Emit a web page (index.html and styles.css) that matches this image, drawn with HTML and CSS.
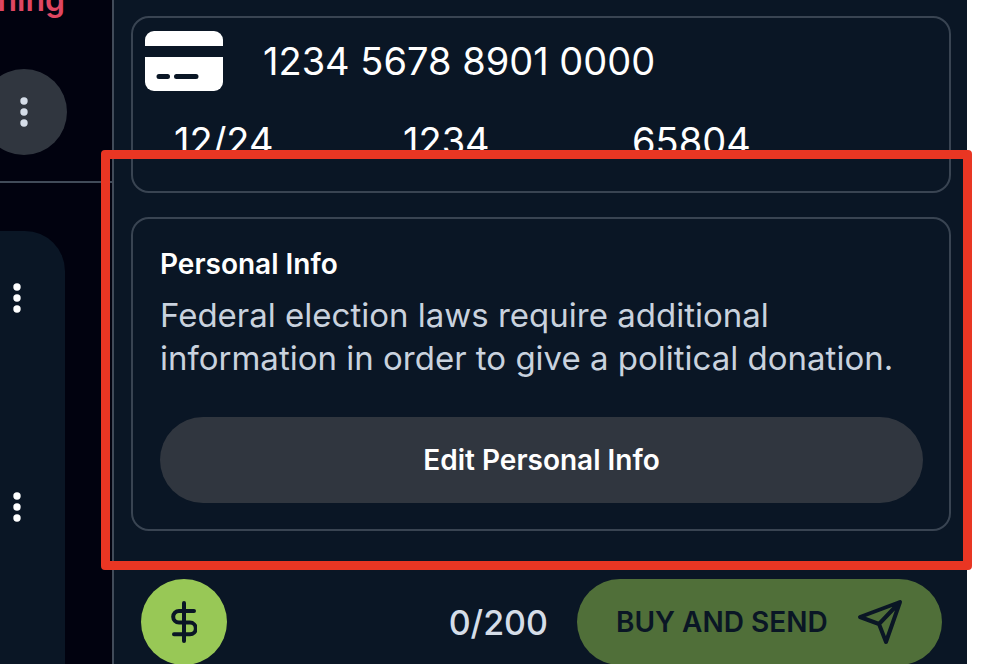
FILE: index.html
```html
<!DOCTYPE html>
<html lang="en">
<head>
<meta charset="utf-8">
<title>Payment details</title>
<link rel="stylesheet" href="styles.css">
</head>
<body>
<div class="app">
  <aside class="sidebar">
    <header class="sidebar-head">
      <h1 class="status"><span>ning</span></h1>
      <button class="more more-round" type="button" aria-label="More options">
        <svg class="dots" viewBox="0 0 8 32"><circle cx="4" cy="5" r="3.700"/><circle cx="4" cy="16" r="3.700"/><circle cx="4" cy="27" r="3.700"/></svg>
      </button>
    </header>
    <section class="feed">
      <button class="more" type="button" aria-label="Item options">
        <svg class="dots" viewBox="0 0 8 32"><circle cx="4" cy="5" r="3.700"/><circle cx="4" cy="16" r="3.700"/><circle cx="4" cy="27" r="3.700"/></svg>
      </button>
      <button class="more" type="button" aria-label="Item options">
        <svg class="dots" viewBox="0 0 8 32"><circle cx="4" cy="5" r="3.700"/><circle cx="4" cy="16" r="3.700"/><circle cx="4" cy="27" r="3.700"/></svg>
      </button>
    </section>
  </aside>
  <main class="panel">
    <section class="box card">
      <div class="card-top">
        <svg class="card-icon" viewBox="0 0 78 60">
          <path d="M0 15V9a9 9 0 0 1 9-9h60a9 9 0 0 1 9 9v6z"/>
          <path d="M0 26h78v25a9 9 0 0 1-9 9H9a9 9 0 0 1-9-9z"/>
          <path class="card-lines" d="M14 45.500h8.500M31.500 45.500H51"/>
        </svg>
        <span class="digits">1234 5678 8901 0000</span>
      </div>
      <div class="card-bottom digits"><span>12/24</span><span>1234</span><span>65804</span></div>
    </section>
    <section class="box personal">
      <h2 class="label">Personal Info</h2>
      <p class="note">Federal election laws require additional information in order to give a political donation.</p>
      <button class="pill edit" type="button">Edit Personal Info</button>
    </section>
    <footer class="actions">
      <button class="coin" type="button" aria-label="Add amount">
        <svg class="coin-icon" viewBox="0 0 26 42"><path d="M13 2v38M23 10H8a5.800 5.800 0 0 0 0 11.600H19a5.800 5.800 0 0 1 0 11.600H3"/></svg>
      </button>
      <span class="count">0/200</span>
      <button class="pill buy" type="button">BUY AND SEND
        <svg class="send-icon" viewBox="0 0 46 46"><path d="M43 3 3 18l19 7 7 18zM43 3 22 25"/></svg>
      </button>
    </footer>
    <div class="highlight"></div>
  </main>
</div>
</body>
</html>
```
FILE: styles.css
```css
* { box-sizing: border-box; }
body {
  margin: 0;
  overflow: hidden;
  background: #fff;
  color: #fff;
  font-family: Inter, "Liberation Sans", sans-serif;
}
button {
  margin: 0;
  padding: 0;
  border: 0;
  background: none;
  color: inherit;
  font: inherit;
}
h1, h2, p { margin: 0; }
svg { display: block; }

.app {
  display: flex;
  height: 100vh;
  margin-right: 25px;
  background: #0a1625;
}

.sidebar {
  display: flex;
  flex: 0 0 112px;
  flex-direction: column;
  min-width: 0;
  background: #01020f;
}
.sidebar-head {
  height: 183px;
  padding-right: 45px;
  border-bottom: 2px solid #414b59;
}
.status {
  display: flex;
  justify-content: flex-end;
  height: 69px;
  padding-right: 2px;
  color: #df4661;
  font-size: 32px;
  font-weight: 600;
  line-height: 40px;
}
.status span { margin-top: -20px; }
.more {
  display: flex;
  align-items: center;
  justify-content: center;
  width: 34px;
  height: 34px;
}
.more-round {
  width: 86px;
  height: 86px;
  margin-left: -19px;
  border-radius: 50%;
  background: #30363f;
  color: #d5dde8;
}
.dots { width: 8px; height: 32px; fill: currentColor; }
.feed {
  display: flex;
  flex: 1;
  flex-direction: column;
  gap: 175px;
  margin-top: 48px;
  margin-right: 47px;
  padding-top: 50px;
  border-top-right-radius: 40px;
  background: #0a1625;
}

.panel {
  position: relative;
  display: flex;
  flex: 1;
  flex-direction: column;
  gap: 24px;
  min-width: 0;
  padding: 16px 16px 0 17px;
  border-left: 2px solid #414b59;
}
.box {
  flex: none;
  border: 2px solid #394452;
  border-radius: 18px;
}
.card { height: 177px; padding: 13px 12px; }
.card-top { display: flex; align-items: center; gap: 40px; }
.card-icon { width: 78px; height: 60px; fill: #fff; }
.card-lines { stroke: #0a1625; stroke-width: 5px; stroke-linecap: round; }
.digits { font-size: 38px; font-weight: 400; line-height: 48px; }
.card-bottom {
  display: grid;
  grid-template-columns: repeat(3, 229px);
  margin-top: 26px;
  padding-left: 29px;
}
.personal { padding: 29px 26px 26px 27px; }
.label { font-size: 28px; font-weight: 600; line-height: 32px; }
.note {
  margin-top: 14px;
  color: #c9d2de;
  font-size: 33px;
  font-weight: 400;
  line-height: 43px;
}
.pill {
  height: 86px;
  border-radius: 43px;
  font-size: 28px;
  font-weight: 600;
}
.edit { width: 100%; margin-top: 37px; background: #30363f; }
.actions {
  display: flex;
  align-items: center;
  margin-top: 24px;
  padding: 0 9px 0 10px;
}
.coin {
  display: grid;
  flex: none;
  place-items: center;
  width: 86px;
  height: 86px;
  border-radius: 50%;
  background: #98c856;
}
.coin-icon {
  width: 26px;
  height: 42px;
  fill: none;
  stroke: #0a1625;
  stroke-width: 4px;
  stroke-linecap: round;
}
.count {
  margin-left: auto;
  color: #d5dde8;
  font-size: 34px;
  font-weight: 500;
}
.buy {
  display: flex;
  align-items: center;
  justify-content: space-between;
  width: 365px;
  margin-left: 29px;
  padding: 0 39px;
  background: #506f39;
  color: #0a1625;
}
.send-icon {
  width: 46px;
  height: 46px;
  fill: none;
  stroke: currentColor;
  stroke-width: 4px;
  stroke-linejoin: round;
}

.highlight {
  position: absolute;
  top: 150px;
  right: -5px;
  left: -13px;
  height: 420px;
  border: 9px solid #e93623;
  border-radius: 4px;
  pointer-events: none;
}
```
